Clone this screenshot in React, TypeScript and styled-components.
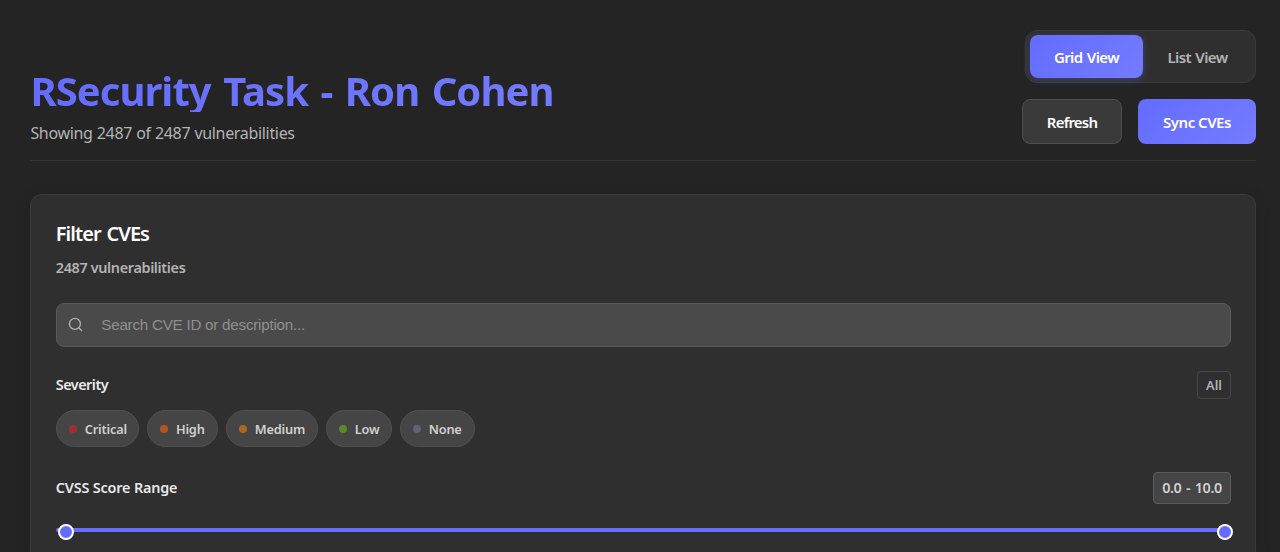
import React from 'react';
import styled, { createGlobalStyle } from 'styled-components';

const GlobalStyle = createGlobalStyle`
  *, *::before, *::after { box-sizing: border-box; }
  body {
    margin: 0;
    background: #242424;
    font-family: 'Segoe UI', 'Noto Sans', 'Open Sans', sans-serif;
    color: #fff;
  }
  h1, h2, p { margin: 0; }
`;

const accent = 'linear-gradient(135deg, #646cff, #747bff)';

const Page = styled.main`
  width: 1280px;
  height: 552px;
  overflow: hidden;
  padding: 30px 24px 0 30.4px;
`;

const Header = styled.header`
  display: flex;
  justify-content: space-between;
  align-items: flex-end;
  height: 131px;
  padding-bottom: 16px;
  border-bottom: 1px solid #343434;
`;

const Heading = styled.div`
  display: flex;
  flex-direction: column;
`;

const Title = styled.h1`
  height: 44px;
  font-size: 40px;
  font-weight: 700;
  line-height: 46px;
  letter-spacing: -0.95px;
  word-spacing: 3px;
  white-space: nowrap;
  color: transparent;
  background: ${accent};
  background-clip: text;
  -webkit-background-clip: text;
`;

const Subtitle = styled.p`
  margin: 9px 0 -1px;
  font-size: 16px;
  line-height: 24px;
  letter-spacing: -0.32px;
  word-spacing: 0.3px;
  color: #b3b3b3;
`;

const Actions = styled.div`
  display: flex;
  flex-direction: column;
  align-items: flex-end;
  gap: 16px;
`;

const Toggle = styled.div`
  display: flex;
  width: 231px;
  height: 53px;
  padding: 4px;
  background: #2f2f2f;
  border: 1px solid #3a3a3a;
  border-radius: 12px;
`;

const ToggleButton = styled.button<{ $active?: boolean }>`
  flex: none;
  width: ${p => (p.$active ? 113 : 109)}px;
  height: 43px;
  padding: 0;
  border: 0;
  border-radius: 8px;
  font: 600 15px/22px 'Segoe UI', 'Noto Sans', sans-serif;
  letter-spacing: -0.6px;
  word-spacing: 1px;
  color: ${p => (p.$active ? '#fff' : '#b3b3b3')};
  background: ${p => (p.$active ? accent : 'transparent')};
  box-shadow: ${p => (p.$active ? '0 2px 8px rgba(100, 108, 255, 0.3)' : 'none')};
`;

const ButtonRow = styled.div`
  display: flex;
  gap: 16px;
`;

const Button = styled.button<{ $primary?: boolean }>`
  width: ${p => (p.$primary ? 118 : 100)}px;
  height: 45px;
  padding: 0;
  border: ${p => (p.$primary ? '0' : '1px solid #4f4f4f')};
  border-radius: 8px;
  font: 600 15px/22px 'Segoe UI', 'Noto Sans', sans-serif;
  letter-spacing: ${p => (p.$primary ? -0.5 : -0.8)}px;
  color: #fff;
  background: ${p => (p.$primary ? accent : '#3a3a3a')};
`;

const Card = styled.section`
  height: 358px;
  margin-top: 33px;
  padding: 24px 24px 0 24.4px;
  background: #2f2f2f;
  border: 1px solid #3a3a3a;
  border-bottom: 0;
  border-radius: 12px 12px 0 0;
  box-shadow: 0 4px 16px rgba(0, 0, 0, 0.15);
`;

const CardTitle = styled.h2`
  font-size: 20px;
  font-weight: 600;
  line-height: 30px;
  letter-spacing: -0.95px;
  word-spacing: 1.5px;
`;

const Count = styled.p`
  margin-top: 8px;
  font-size: 14.4px;
  font-weight: 600;
  line-height: 22px;
  letter-spacing: -0.34px;
  color: #b3b3b3;
`;

const SearchBox = styled.label`
  display: flex;
  align-items: center;
  gap: 18px;
  height: 44px;
  margin-top: 24px;
  padding: 0 0 2px 11.5px;
  background: #4a4a4a;
  border: 1px solid #5a5a5a;
  border-radius: 8px;
  color: #b0b0b0;
`;

const SearchInput = styled.input`
  flex: 1;
  min-width: 0;
  padding: 0;
  border: 0;
  outline: 0;
  background: transparent;
  color: #fff;
  font: 15.2px 'Liberation Sans', Arial, sans-serif;
  letter-spacing: -0.24px;
  &::placeholder { color: #8f8f8f; opacity: 1; }
`;

const SectionRow = styled.div<{ $height: number; $top: number }>`
  display: flex;
  align-items: center;
  justify-content: space-between;
  height: ${p => p.$height}px;
  margin-top: ${p => p.$top}px;
`;

const Label = styled.span<{ $spacing: number }>`
  margin-bottom: 2px;
  font-size: 14.4px;
  font-weight: 600;
  letter-spacing: ${p => p.$spacing}px;
  color: #e8e8e8;
`;

const AllButton = styled.button`
  width: 34px;
  height: 28px;
  padding: 0;
  border: 1px solid #474747;
  border-radius: 4px;
  background: transparent;
  color: #b3b3b3;
  font: 600 12.8px 'Segoe UI', 'Noto Sans', sans-serif;
`;

const Chips = styled.div`
  display: flex;
  gap: 8px;
  margin-top: 11px;
`;

const Chip = styled.button<{ $width: number }>`
  display: flex;
  align-items: center;
  gap: 8px;
  width: ${p => p.$width}px;
  height: 37px;
  margin-bottom: 1px;
  padding: 0 0 0 12px;
  border: 1px solid #505050;
  border-radius: 19px;
  background: #454545;
  color: #d0d0d0;
  font: 600 12.8px 'Segoe UI', 'Noto Sans', sans-serif;
  letter-spacing: -0.2px;
  white-space: nowrap;
`;

const Dot = styled.span<{ $color: string }>`
  flex: none;
  width: 8px;
  height: 8px;
  border-radius: 50%;
  background: ${p => p.$color};
`;

const RangeValue = styled.span`
  width: 78px;
  height: 32px;
  border: 1px solid #595959;
  border-radius: 4px;
  background: #454545;
  color: #d0d0d0;
  font-size: 14.4px;
  font-weight: 600;
  line-height: 30px;
  letter-spacing: -0.4px;
  word-spacing: 1.2px;
  text-align: center;
`;

const Slider = styled.div`
  position: relative;
  height: 4px;
  margin-top: 24px;
  border-radius: 2px;
  background: #666eff;
`;

const Thumb = styled.span<{ $end?: boolean }>`
  position: absolute;
  top: -4px;
  ${p => (p.$end ? 'right: -2px' : 'left: 2px')};
  width: 16px;
  height: 16px;
  border: 2px solid #fff;
  border-radius: 50%;
  background: #646cff;
`;

const severities = [
  { name: 'Critical', color: '#a03030', width: 83.2 },
  { name: 'High', color: '#b25422', width: 70.8 },
  { name: 'Medium', color: '#a8691f', width: 92 },
  { name: 'Low', color: '#5c8a22', width: 66 },
  { name: 'None', color: '#60626e', width: 75 },
];

export default function App() {
  return (
    <Page>
      <GlobalStyle />
      <Header>
        <Heading>
          <Title>RSecurity Task - Ron Cohen</Title>
          <Subtitle>Showing 2487 of 2487 vulnerabilities</Subtitle>
        </Heading>
        <Actions>
          <Toggle>
            <ToggleButton $active>Grid View</ToggleButton>
            <ToggleButton>List View</ToggleButton>
          </Toggle>
          <ButtonRow>
            <Button>Refresh</Button>
            <Button $primary>Sync CVEs</Button>
          </ButtonRow>
        </Actions>
      </Header>
      <Card>
        <CardTitle>Filter CVEs</CardTitle>
        <Count>2487 vulnerabilities</Count>
        <SearchBox>
          <svg width="15" height="15" viewBox="0 0 15 15" fill="none" stroke="currentColor" strokeWidth="1.35" strokeLinecap="round">
            <circle cx="6.9" cy="6.9" r="5.5" />
            <path d="M10.9 10.9 L13.6 13.6" />
          </svg>
          <SearchInput placeholder="Search CVE ID or description..." />
        </SearchBox>
        <SectionRow $height={28} $top={24}>
          <Label $spacing={-0.5}>Severity</Label>
          <AllButton>All</AllButton>
        </SectionRow>
        <Chips>
          {severities.map(s => (
            <Chip key={s.name} $width={s.width}>
              <Dot $color={s.color} />
              {s.name}
            </Chip>
          ))}
        </Chips>
        <SectionRow $height={32} $top={24}>
          <Label $spacing={-0.17}>CVSS Score Range</Label>
          <RangeValue>0.0 - 10.0</RangeValue>
        </SectionRow>
        <Slider>
          <Thumb />
          <Thumb $end />
        </Slider>
      </Card>
    </Page>
  );
}
